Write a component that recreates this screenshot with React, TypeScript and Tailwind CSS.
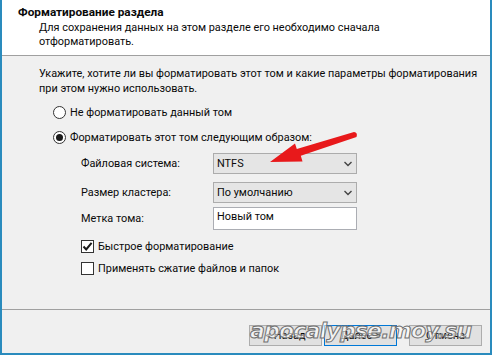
import React from "react";

function Radio({ checked }: { checked?: boolean }) {
  return (
    <span className="w-[13px] h-[13px] rounded-full border border-[#333333] bg-white flex items-center justify-center shrink-0">
      {checked && <span className="w-[7px] h-[7px] rounded-full bg-[#1a1a1a]" />}
    </span>
  );
}

function Check({ checked }: { checked?: boolean }) {
  return (
    <span className="w-[13px] h-[13px] border border-[#333333] bg-white flex items-center justify-center shrink-0">
      {checked && (
        <svg width="11" height="11" viewBox="0 0 11 11">
          <path d="M1.5 5.5 L4.2 8.4 L9.6 1.8" fill="none" stroke="#1a1a1a" strokeWidth="2" />
        </svg>
      )}
    </span>
  );
}

function Select({ value }: { value: string }) {
  return (
    <div className="w-[144px] h-[21px] bg-[#e5e5e5] border border-[#acacac] flex items-center justify-between pl-[3px] pr-[4px]">
      <span>{value}</span>
      <svg width="8" height="6" viewBox="0 0 8 6">
        <path d="M0.5 1 L4 4.5 L7.5 1" fill="none" stroke="#444" strokeWidth="1.4" />
      </svg>
    </div>
  );
}

export default function App() {
  return (
    <div className="relative w-[492px] h-[355px] border-l-2 border-r-2 border-b-2 border-[#2a8bbd] flex flex-col font-['Roboto',sans-serif] text-[10.9px] text-[#0a0a0a] overflow-hidden whitespace-nowrap">
      <div className="h-[56px] bg-white border-b border-[#a0a0a0] shrink-0 pl-[16px] pt-[5px]">
        <div className="font-bold leading-[15px] text-[11.8px]">Форматирование раздела</div>
        <div className="pl-[21px] pt-[1px] leading-[14px]">
          <div>Для сохранения данных на этом разделе его необходимо сначала</div>
          <div>отформатировать.</div>
        </div>
      </div>

      <div className="flex-1 bg-[#f0f0f0] pt-[10px] pl-[37px] leading-[15px]">
        <div>Укажите, хотите ли вы форматировать этот том и какие параметры форматирования</div>
        <div>при этом нужно использовать.</div>

        <div className="mt-[10px] ml-[14px] h-[13px] flex items-center gap-[4px]">
          <Radio />
          <span>Не форматировать данный том</span>
        </div>
        <div className="mt-[12px] ml-[14px] h-[13px] flex items-center gap-[4px]">
          <Radio checked />
          <span>Форматировать этот том следующим образом:</span>
        </div>

        <div className="ml-[42px] mt-[9px] flex items-center h-[21px]">
          <span className="w-[132px]">Файловая система:</span>
          <Select value="NTFS" />
        </div>
        <div className="ml-[42px] mt-[8px] flex items-center h-[21px]">
          <span className="w-[132px]">Размер кластера:</span>
          <Select value="По умолчанию" />
        </div>
        <div className="ml-[42px] mt-[4px] flex items-center h-[23px]">
          <span className="w-[132px]">Метка тома:</span>
          <div className="w-[144px] h-[23px] bg-white border border-[#abadb3] pl-[3px] leading-[17px]">Новый том</div>
        </div>

        <div className="ml-[42px] mt-[10px] h-[13px] flex items-center gap-[4px]">
          <Check checked />
          <span>Быстрое форматирование</span>
        </div>
        <div className="ml-[42px] mt-[9px] h-[13px] flex items-center gap-[4px]">
          <Check />
          <span>Применять сжатие файлов и папок</span>
        </div>
      </div>

      <div className="h-[44px] shrink-0 bg-[#f0f0f0] border-t border-[#a0a0a0] flex justify-end items-start pt-[15px] pr-[8px]">
        <div className="flex">
          <button className="w-[73px] h-[21px] bg-[#e1e1e1] border border-[#adadad] leading-[19px] text-center">&lt; Назад</button>
          <button className="ml-[2px] w-[73px] h-[21px] bg-[#e1e1e1] border border-[#0078d7] leading-[19px] text-center">Далее &gt;</button>
          <button className="ml-[12px] w-[73px] h-[21px] bg-[#e1e1e1] border border-[#adadad] leading-[19px] text-center">Отмена</button>
        </div>
      </div>

      <svg className="absolute left-0 top-0 pointer-events-none" width="492" height="355" viewBox="0 0 492 355">
        <path
          d="M268 162 L293 143.5 L294.8 149 L352 132 Q356 132.5 354.5 137 L298.8 155.8 L300.5 161.5 Z"
          fill="#e8191b"
        />
      </svg>

      <div className="absolute left-[248px] top-[317px] font-['DejaVu_Sans',sans-serif] italic font-bold text-[22px] leading-[28px] tracking-[-0.8px] text-white/60 [-webkit-text-stroke:1px_#707070] pointer-events-none">
        apocalypse.moy.su
      </div>
    </div>
  );
}
